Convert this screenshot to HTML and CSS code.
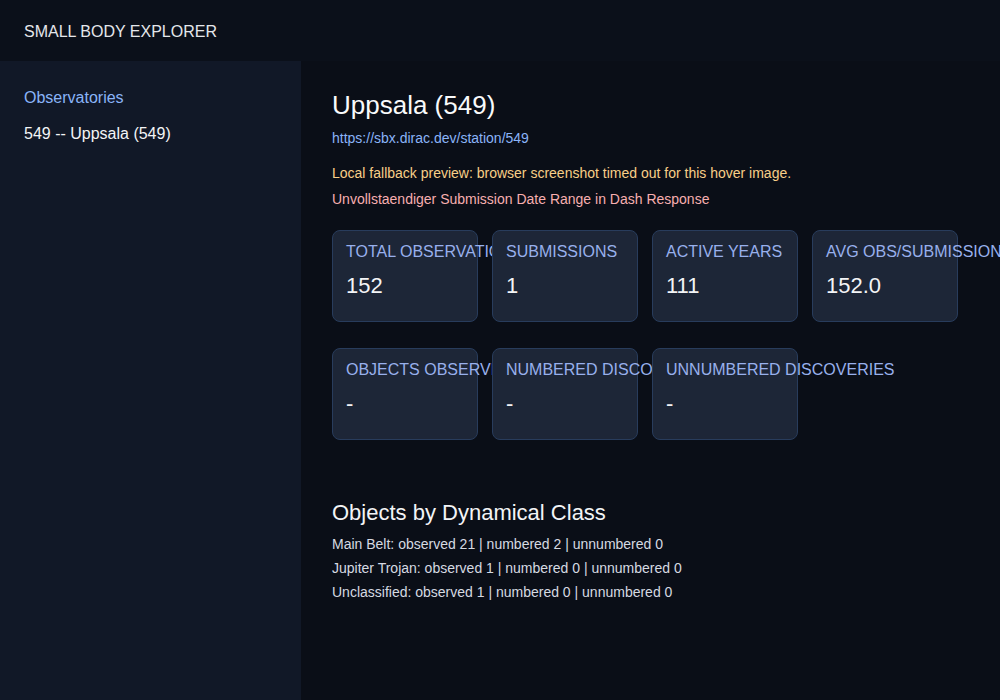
FILE: index.html
```html
<!DOCTYPE html>
<html lang="en">
<head>
    <meta charset="UTF-8">
    <meta name="viewport" content="width=device-width, initial-scale=1.0">
    <title>Small Body Explorer</title>
    <link rel="stylesheet" href="styles.css">
</head>
<body>
    <header class="topbar">SMALL BODY EXPLORER</header>
    <div class="layout">
        <aside class="sidebar">
            <a class="side-heading" href="#">Observatories</a>
            <p class="side-item">549 -- Uppsala (549)</p>
        </aside>

        <main class="content">
            <h1 class="station-title">Uppsala (549)</h1>
            <a class="station-link" href="#">https://sbx.dirac.dev/station/549</a>
            <p class="note warn">Local fallback preview: browser screenshot timed out for this hover image.</p>
            <p class="note error">Unvollstaendiger Submission Date Range in Dash Response</p>

            <!-- summary stats -->
            <div class="stats">
                <div class="card">
                    <div class="card-label">TOTAL OBSERVATIONS</div>
                    <div class="card-value">152</div>
                </div>
                <div class="card">
                    <div class="card-label">SUBMISSIONS</div>
                    <div class="card-value">1</div>
                </div>
                <div class="card">
                    <div class="card-label">ACTIVE YEARS</div>
                    <div class="card-value">111</div>
                </div>
                <div class="card">
                    <div class="card-label">AVG OBS/SUBMISSION</div>
                    <div class="card-value">152.0</div>
                </div>
            </div>

            <!-- discoveries -->
            <div class="stats">
                <div class="card">
                    <div class="card-label">OBJECTS OBSERVED</div>
                    <div class="card-value">-</div>
                </div>
                <div class="card">
                    <div class="card-label">NUMBERED DISCOVERIES</div>
                    <div class="card-value">-</div>
                </div>
                <div class="card">
                    <div class="card-label">UNNUMBERED DISCOVERIES</div>
                    <div class="card-value">-</div>
                </div>
            </div>

            <h2 class="section-title">Objects by Dynamical Class</h2>
            <ul class="class-list">
                <li>Main Belt: observed 21 | numbered 2 | unnumbered 0</li>
                <li>Jupiter Trojan: observed 1 | numbered 0 | unnumbered 0</li>
                <li>Unclassified: observed 1 | numbered 0 | unnumbered 0</li>
            </ul>
        </main>
    </div>
</body>
</html>
```

FILE: styles.css
```css
*{
    box-sizing: border-box;
}
html, body{
    margin: 0;
    height: 100%;
}
body{
    background-color: #0a0e17;
    color: #e5e7eb;
    font-family: "Liberation Sans", Arial, sans-serif;
    display: flex;
    flex-direction: column;
}

.topbar{
    height: 61px;
    padding: 2px 24px 0;
    display: flex;
    align-items: center;
    background-color: #0b101a;
    color: #e5e7eb;
    font-size: 16px;
}

.layout{
    flex: 1;
    display: flex;
}

.sidebar{
    width: 301px;
    background-color: #111827;
    padding: 28px 24px;
}
.side-heading{
    display: block;
    color: #8ab4f8;
    text-decoration: none;
    font-size: 16px;
}
.side-item{
    margin: 18px 0 0;
    color: #f3f4f6;
    font-size: 16px;
}

.content{
    flex: 1;
    padding: 29px 31px;
}
.station-title{
    margin: 0;
    font-size: 26px;
    font-weight: normal;
    color: #f9fafb;
}
.station-link{
    display: block;
    margin-top: 9px;
    color: #8ab4f8;
    text-decoration: none;
    font-size: 14px;
}
.note{
    margin: 0;
    font-size: 14px;
}
.warn{
    margin-top: 19px;
    color: #f8cf88;
}
.error{
    margin-top: 10px;
    color: #f7aeb0;
}

.stats{
    display: flex;
    gap: 14px;
    margin-top: 23px;
}
.stats + .stats{
    margin-top: 26px;
}
.card{
    width: 146px;
    height: 92px;
    flex-shrink: 0;
    padding: 12px 13px;
    background-color: #1d2637;
    border: 1px solid #283c5c;
    border-radius: 8px;
}
.card-label{
    white-space: nowrap;
    color: #98b0ec;
    font-size: 16px;
}
.card-value{
    margin-top: 12px;
    color: #f3f4f6;
    font-size: 22px;
}

.section-title{
    margin: 60px 0 0;
    font-size: 22px;
    font-weight: normal;
    color: #f3f4f6;
}
.class-list{
    list-style: none;
    margin: 6px 0 0;
    padding: 0;
    font-size: 14px;
    line-height: 24px;
    color: #d6dae2;
}
```
